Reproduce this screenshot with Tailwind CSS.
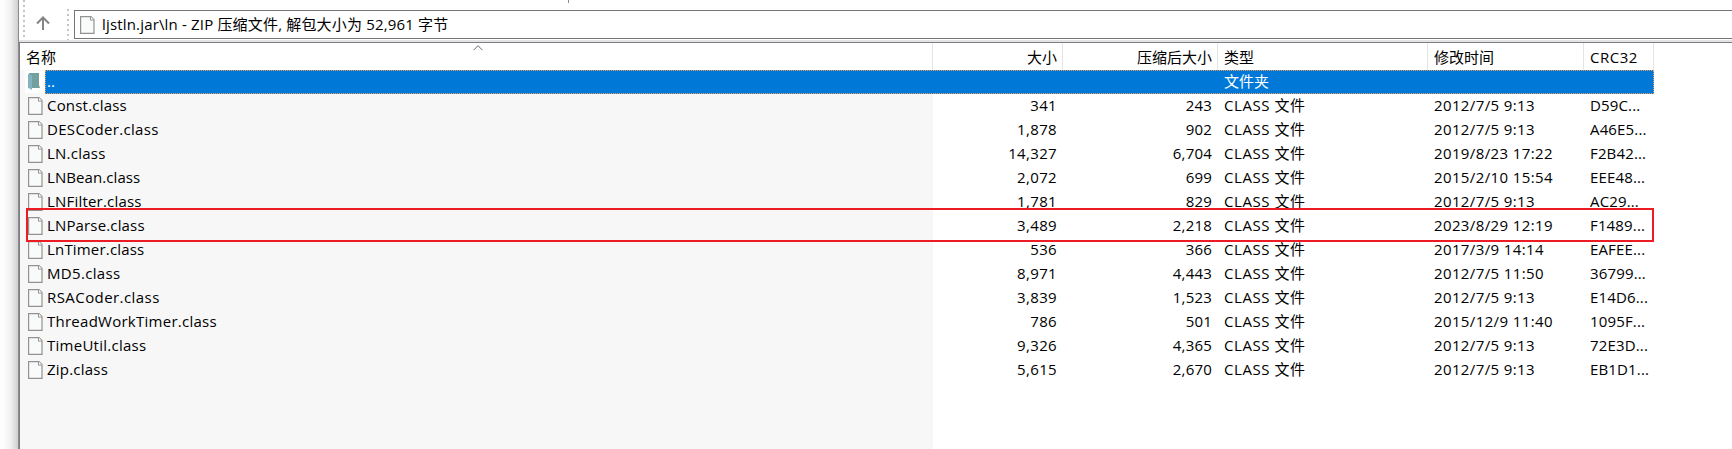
<!DOCTYPE html>
<html lang="zh-CN">
<head>
<meta charset="utf-8">
<title>ljstln.jar</title>
<script src="https://cdn.jsdelivr.net/npm/@tailwindcss/browser@4"></script>
</head>
<body class="relative flex h-[449px] w-[1732px] overflow-hidden bg-white font-['Open_Sans','Noto_Sans_CJK_SC',sans-serif] text-[15px] text-black">
<svg class="hidden">
  <symbol id="file" viewBox="0 0 15 18">
    <path d="M.6.6H11L14 3.600V17.400H.6z" fill="#f9fbfb" stroke="#929292" stroke-width="1.200"/>
    <path d="M10.500.6v3.500H14" fill="#fff" stroke="#929292"/>
  </symbol>
</svg>
<div class="w-[18px] shrink-0 bg-linear-to-r from-[#fdfdfd] from-20% via-[#f0f0f0] via-60% to-[#cfcfcf]"></div>
<div class="w-px shrink-0 bg-[#8a8a8e]"></div>
<main class="flex min-w-0 grow flex-col">
  <div class="relative flex h-10 shrink-0">
    <div class="absolute top-0 left-[549px] h-[3px] w-px bg-[#8a8a8a]"></div>
    <div class="ml-1 h-10 w-[2px] bg-[repeating-linear-gradient(#c4c4c4_0_2px,transparent_2px_5px)]"></div>
    <svg class="mt-4 ml-[11px] size-[14px]" viewBox="0 0 14 14" fill="none" stroke="#848484" stroke-width="2"><path d="M7 14V1.5M1 7.5l6-6 6 6"/></svg>
    <div class="mt-[9px] ml-[17px] h-[31px] w-[2px] bg-[repeating-linear-gradient(#c4c4c4_0_2px,transparent_2px_5px)]"></div>
    <div class="mt-[10px] ml-[5px] flex h-[29px] grow items-center border border-r-0 border-[#757575] pl-[5px]">
      <svg class="h-[18px] w-[15px]"><use href="#file"/></svg>
      <span class="-mt-px ml-[7px] whitespace-pre tracking-[0.17px]">ljstln.jar\ln - ZIP 压缩文件, 解包大小为 52,961 字节</span>
    </div>
  </div>
  <div class="h-[2px] shrink-0 bg-[#e3e3e3]"></div>
  <div class="relative flex grow flex-col border-t border-l border-[#7d7d86]">
    <div class="absolute top-[27px] bottom-0 left-0 w-[913px] bg-[#f7f7f7]"></div>
    <div class="relative flex h-[27px] leading-[28px]">
      <div class="w-[913px] border-r border-[#e5e5e5] pl-[6px]">名称</div>
      <div class="w-[130px] border-r border-[#e5e5e5] pr-[5px] text-right">大小</div>
      <div class="w-[155px] border-r border-[#e5e5e5] pr-[5px] text-right">压缩后大小</div>
      <div class="w-[210px] border-r border-[#e5e5e5] pl-[6px]">类型</div>
      <div class="w-[156px] border-r border-[#e5e5e5] pl-[6px]">修改时间</div>
      <div class="w-[70px] border-r border-[#e5e5e5] pl-[6px] tracking-[0.5px]">CRC32</div>
      <svg class="absolute top-[2px] left-[453px] h-[6px] w-[10px]" viewBox="0 0 10 6" fill="none" stroke="#6a6a6a"><path d="M.5 5.2 5 .7l4.500 4.500"/></svg>
    </div>
    <div class="relative flex h-6 text-white">
      <div class="mt-px ml-[5px] h-[22px] w-5 bg-white pt-[2px] pl-[3px]">
        <svg class="h-[17px] w-3" viewBox="0 0 12 17"><path d="M1 0h10v12l1 3H3z" fill="#72a09e"/><path d="M0 1l4 1.500V17l-1.500-1L0 15z" fill="#83b3c0"/></svg>
      </div>
      <div class="flex w-[1609px] border border-dotted border-[#f0a060] bg-[#0078d7] leading-[21px]">
        <div class="w-[1178px] pl-px">..</div>
        <div>文件夹</div>
      </div>
    </div>
    <div id="rows" class="relative"></div>
  </div>
</main>
<div class="absolute top-[208px] left-[26px] h-[34px] w-[1628px] border-2 border-[#ed1c24]"></div>
<script>
// name, name letter spacing, size, packed size, modified, crc
const data = [
  ["Const.class",0.2,"341","243","2012/7/5 9:13","D59C..."],
  ["DESCoder.class",0.32,"1,878","902","2012/7/5 9:13","A46E5..."],
  ["LN.class",0.25,"14,327","6,704","2019/8/23 17:22","F2B42..."],
  ["LNBean.class",0.08,"2,072","699","2015/2/10 15:54","EEE48..."],
  ["LNFilter.class",0.2,"1,781","829","2012/7/5 9:13","AC29..."],
  ["LNParse.class",0.15,"3,489","2,218","2023/8/29 12:19","F1489..."],
  ["LnTimer.class",0.18,"536","366","2017/3/9 14:14","EAFEE..."],
  ["MD5.class",0.33,"8,971","4,443","2012/7/5 11:50","36799..."],
  ["RSACoder.class",0.43,"3,839","1,523","2012/7/5 9:13","E14D6..."],
  ["ThreadWorkTimer.class",0.26,"786","501","2015/12/9 11:40","1095F..."],
  ["TimeUtil.class",0.26,"9,326","4,365","2012/7/5 9:13","72E3D..."],
  ["Zip.class",0.22,"5,615","2,670","2012/7/5 9:13","EB1D1..."],
];
document.getElementById("rows").innerHTML = data.map(r => `
  <div class="flex h-6 whitespace-nowrap leading-[23px]">
    <div class="flex w-[913px] pl-2"><svg class="mt-[3px] h-[18px] w-[15px]"><use href="#file"/></svg><span class="ml-1" style="letter-spacing:${r[1]}px">${r[0]}</span></div>
    <div class="w-[130px] pr-[6px] text-right tracking-[0.35px]">${r[2]}</div>
    <div class="w-[155px] pr-[6px] text-right tracking-[0.2px]">${r[3]}</div>
    <div class="w-[210px] pl-[6px] tracking-[0.55px]">CLASS 文件</div>
    <div class="w-[156px] pl-[6px] tracking-[0.38px]">${r[4]}</div>
    <div class="w-[70px] pl-[6px] tracking-[0.15px]">${r[5]}</div>
  </div>`).join("");
</script>
</body>
</html>
